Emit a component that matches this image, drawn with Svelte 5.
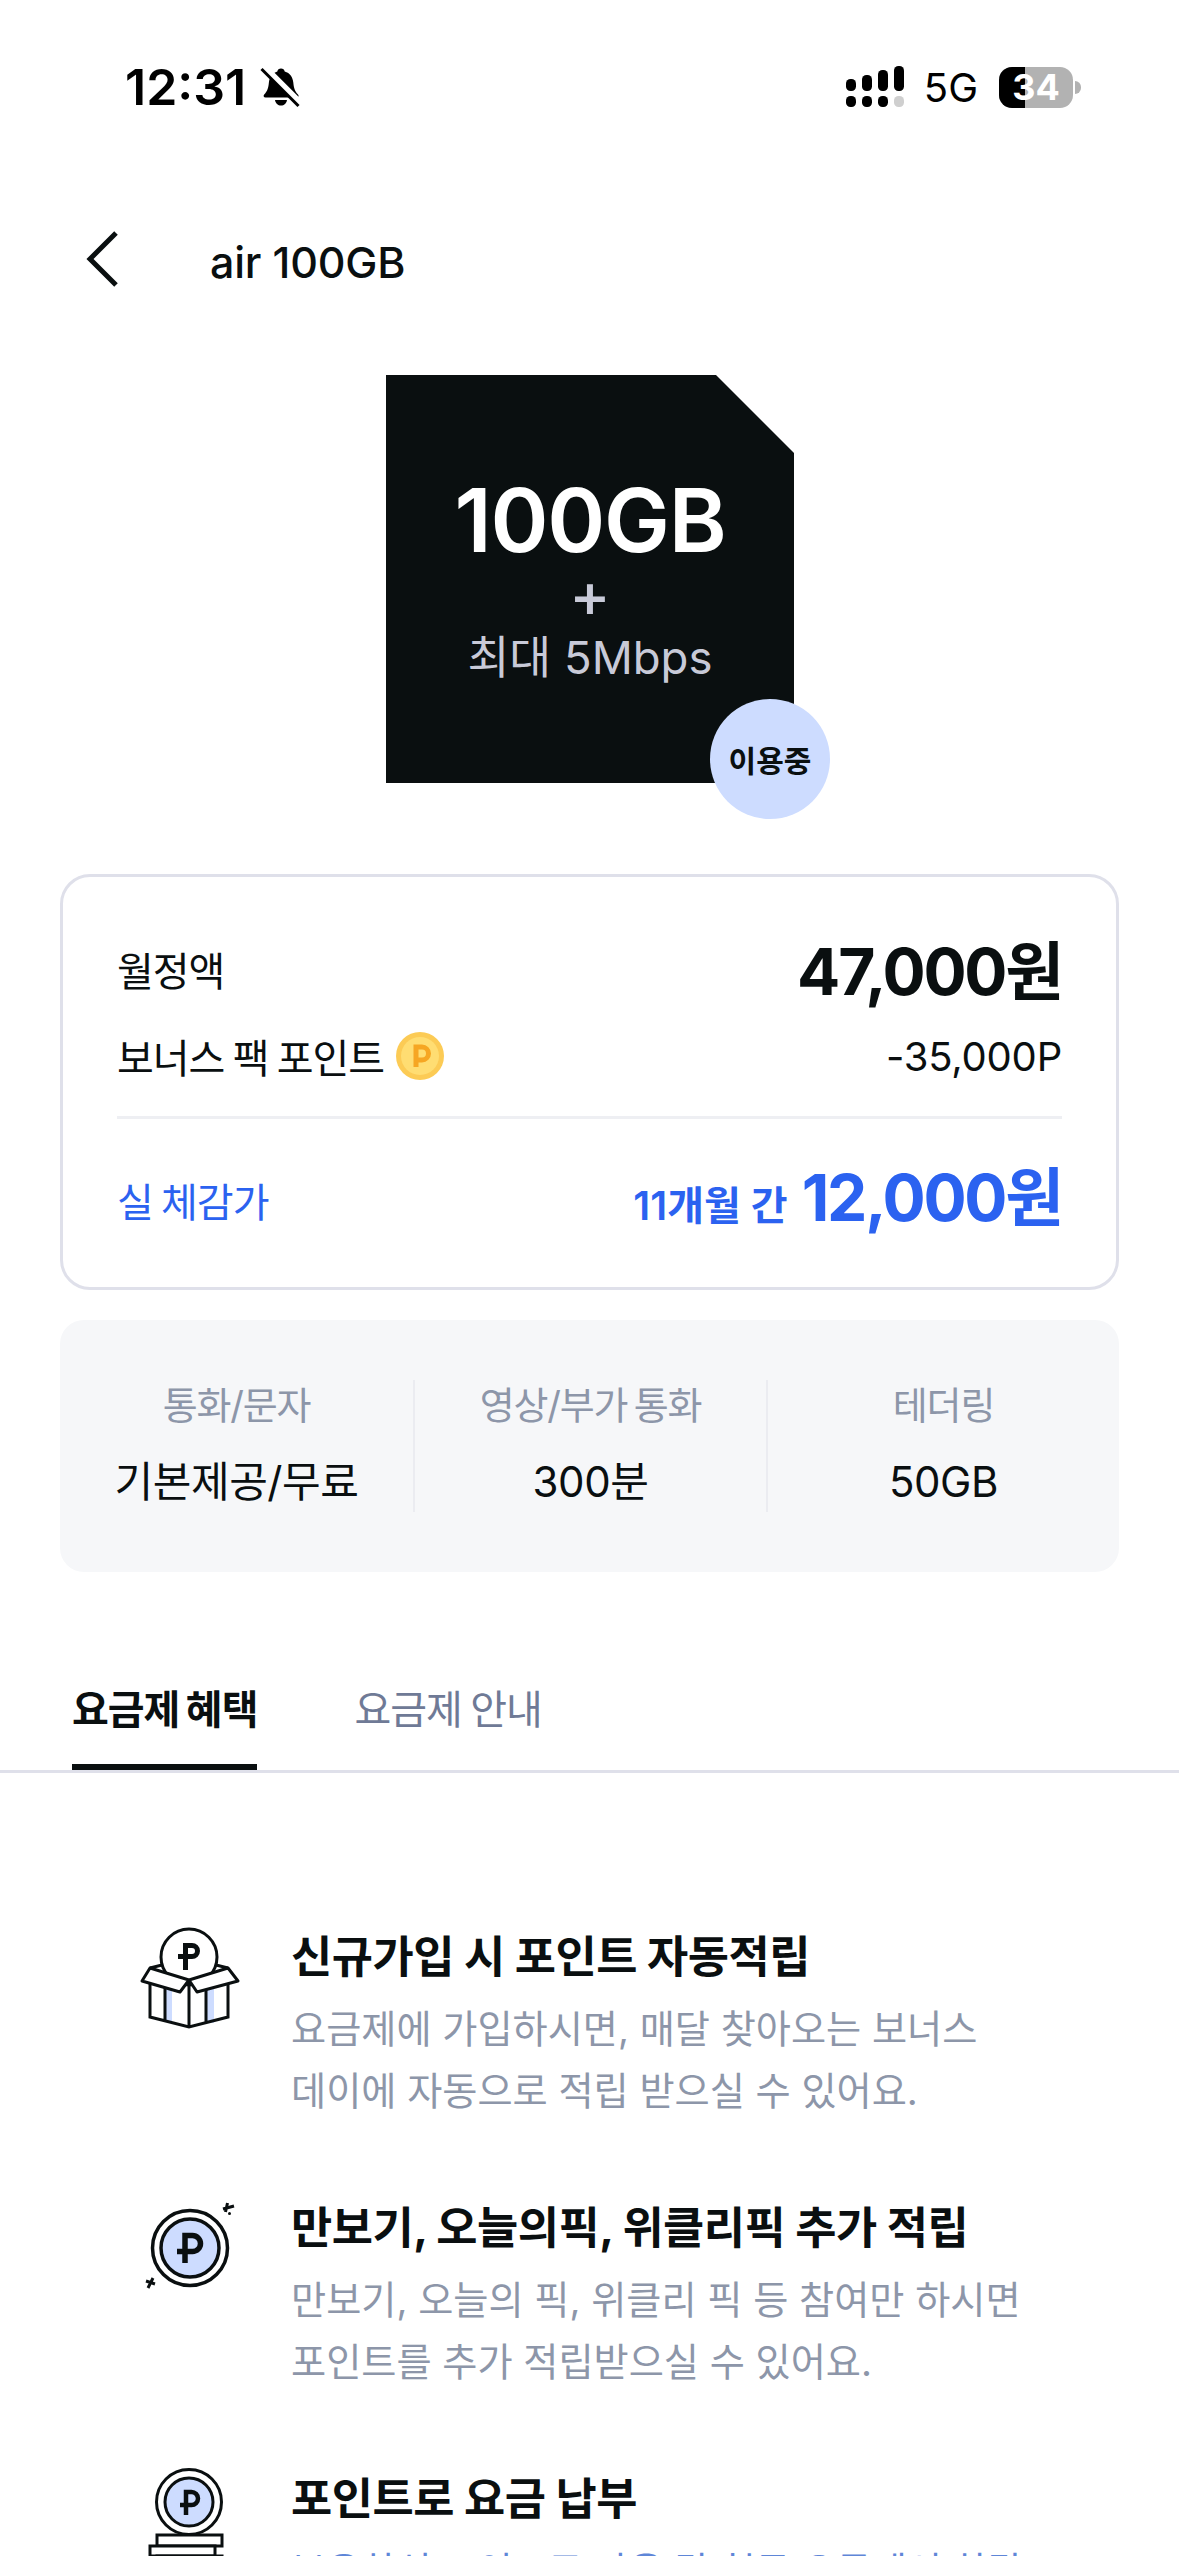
<script>
  const stats = [
    { label: "통화/문자", value: "기본제공/무료" },
    { label: "영상/부가 통화", value: "300분" },
    { label: "테더링", value: "50GB" }
  ];

  const benefits = [
    {
      icon: "box",
      title: "신규가입 시 포인트 자동적립",
      lines: ["요금제에 가입하시면, 매달 찾아오는 보너스", "데이에 자동으로 적립 받으실 수 있어요."]
    },
    {
      icon: "coin",
      title: "만보기, 오늘의픽, 위클리픽 추가 적립",
      lines: ["만보기, 오늘의 픽, 위클리 픽 등 참여만 하시면", "포인트를 추가 적립받으실 수 있어요."]
    },
    {
      icon: "stack",
      title: "포인트로 요금 납부",
      lines: ["보유하신 포인트로 다음 달 청구 요금에서 차감"],
      accent: true
    }
  ];
</script>

<div class="page">
  <header class="status">
    <div class="status-left">
      <span class="time">12:31</span>
      <svg class="bell" width="42" height="43" viewBox="0 0 42 42">
        <path d="M21 2c2 0 3.400 1.300 3.700 3 5.300 1.400 8 5.700 8.600 11 .5 5 1.200 8.500 4.700 12 1.200 1.300.5 3-1.300 3H5.500c-1.800 0-2.500-1.700-1.300-3 3.500-3.500 4.200-7 4.700-12 .6-5.300 3.800-9.600 8.400-11 .3-1.700 1.700-3 3.700-3z" fill="#000"/>
        <path d="M15 33.500h12c-.5 3.500-3 5.500-6 5.500s-5.500-2-6-5.500z" fill="#000"/>
        <path d="M4 0l37 37" stroke="#fff" stroke-width="6"/>
        <path d="M1.500 2.500l37 37" stroke="#000" stroke-width="3"/>
      </svg>
    </div>
    <div class="status-right">
      <svg width="58" height="42" viewBox="0 0 58 42">
        <rect x="0" y="13" width="10" height="12" rx="4.500"/>
        <rect x="16" y="9" width="10" height="16" rx="4.500"/>
        <rect x="32" y="4" width="10" height="21" rx="4.500"/>
        <rect x="48" y="0" width="10" height="25" rx="4.500"/>
        <rect x="0" y="30" width="10" height="11" rx="4.500"/>
        <rect x="16" y="30" width="10" height="11" rx="4.500"/>
        <rect x="32" y="30" width="10" height="11" rx="4.500"/>
        <rect x="48" y="30" width="10" height="11" rx="4.500" fill="#cfcfcf"/>
      </svg>
      <span class="net">5G</span>
      <div class="battery">
        <div class="battery-fill"></div>
        <span class="battery-num">34</span>
      </div>
      <span class="battery-cap"></span>
    </div>
  </header>

  <nav class="topbar">
    <svg class="back" width="34" height="58" viewBox="0 0 34 58">
      <path d="M31 3L5 29l26 26" fill="none" stroke="#0a0f10" stroke-width="5"/>
    </svg>
    <h1>air 100GB</h1>
  </nav>

  <section class="hero">
    <div class="sim">
      <div class="sim-main">100GB</div>
      <div class="sim-plus">+</div>
      <div class="sim-sub">최대 5Mbps</div>
    </div>
    <div class="badge">이용중</div>
  </section>

  <section class="price-card">
    <div class="row row-month">
      <span class="label">월정액</span>
      <strong class="amount">47,000원</strong>
    </div>
    <div class="row row-bonus">
      <span class="label bonus">
        보너스 팩 포인트
        <svg width="48" height="48" viewBox="0 0 48 48">
          <circle cx="24" cy="24" r="24" fill="#fccb55"/>
          <circle cx="24" cy="24" r="19" fill="#ffdd72"/>
          <path d="M20 35V15h6a6 6 0 0 1 0 13h-6" fill="none" stroke="#f6a623" stroke-width="5"/>
        </svg>
      </span>
      <span class="points">-35,000P</span>
    </div>
    <div class="rule"></div>
    <div class="row row-real">
      <span class="label blue">실 체감가</span>
      <span class="real">
        <span class="period">11개월 간</span>
        <strong class="amount blue">12,000원</strong>
      </span>
    </div>
  </section>

  <section class="stats">
    {#each stats as s}
      <div class="stat">
        <span class="stat-label">{s.label}</span>
        <span class="stat-value">{s.value}</span>
      </div>
    {/each}
  </section>

  <div class="tabs">
    <span class="tab active">요금제 혜택</span>
    <span class="tab">요금제 안내</span>
  </div>

  <section class="benefits">
    {#each benefits as b}
      <article class="benefit">
        <div class="icon">
          {#if b.icon === "box"}
            <svg width="102" height="110" viewBox="0 0 102 110" fill="none" stroke="#0a0f10" stroke-width="3">
              <circle cx="50" cy="37" r="28" fill="#fff"/>
              <path d="M46.500 50V25.500h6.500a5.500 5.500 0 0 1 0 11H39" stroke-width="5"/>
              <path d="M11 48l12-3M89 48l-12-3"/>
              <rect x="26" y="68" width="7" height="33" fill="#cddcff" stroke="none"/>
              <rect x="67" y="68" width="8" height="35" fill="#cddcff" stroke="none"/>
              <path d="M11 63v34l39 10 39-10V63M50 60v47M26 68v33M67 70v33"/>
              <path d="M11 48l39 12-9 12-38-11zM89 48l-39 12 8 12 41-11z" fill="#fff" stroke-linejoin="round"/>
            </svg>
          {:else if b.icon === "coin"}
            <svg width="102" height="110" viewBox="0 0 102 110" fill="none" stroke="#0a0f10" stroke-width="3.500">
              <circle cx="51" cy="57" r="37.500"/>
              <circle cx="51" cy="57" r="29" fill="#cddcff"/>
              <path d="M46 72V44.500h7.500a8 8 0 0 1 0 16H38" stroke-width="5.500"/>
              <path d="M84 18l11-3M88.500 12l-2 9M7 90l9 3M14 87l-5 10" stroke-width="3"/>
              <circle cx="90.500" cy="22.500" r="1.500" fill="#0a0f10" stroke="none"/>
            </svg>
          {:else}
            <svg width="102" height="110" viewBox="0 0 102 110" fill="none" stroke="#0a0f10" stroke-width="3">
              <circle cx="50" cy="40" r="32.500"/>
              <circle cx="50" cy="40" r="24" fill="#cddcff"/>
              <path d="M47 53V30h5.500a6.500 6.500 0 0 1 0 13H41" stroke-width="4.500"/>
              <rect x="18" y="73" width="65" height="11" fill="#fff"/>
              <rect x="11" y="84" width="65" height="10" fill="#fff"/>
              <rect x="18" y="94" width="65" height="10" fill="#fff"/>
            </svg>
          {/if}
        </div>
        <div class="copy">
          <h3>{b.title}</h3>
          {#each b.lines as line}
            <p class:accent={b.accent}>{line}</p>
          {/each}
        </div>
      </article>
    {/each}
  </section>
</div>

<style>
  :global(body) {
    margin: 0;
    background: #fff;
  }

  .page {
    width: 1179px;
    height: 2556px;
    overflow: hidden;
    background: #fff;
    color: #0a0f10;
    font-family: Inter, "Noto Sans CJK KR", sans-serif;
  }

  .status {
    height: 220px;
    box-sizing: border-box;
    padding: 64px 98px 0 125px;
    display: flex;
    justify-content: space-between;
    align-items: flex-start;
  }

  .status-left {
    display: flex;
    align-items: center;
    gap: 14px;
  }

  .time {
    font-size: 50px;
    line-height: 46px;
    font-weight: 600;
    color: #000;
  }

  .status-right {
    display: flex;
    align-items: center;
    height: 46px;
  }

  .net {
    font-size: 40px;
    font-weight: 400;
    margin: 0 21px 0 20px;
    color: #000;
  }

  .battery {
    position: relative;
    width: 74px;
    height: 41px;
    border-radius: 13px;
    background: #b2b2b2;
    overflow: hidden;
    display: flex;
    align-items: center;
    justify-content: center;
  }

  .battery-fill {
    position: absolute;
    left: 0;
    top: 0;
    bottom: 0;
    width: 26px;
    background: #000;
  }

  .battery-num {
    position: relative;
    font-size: 36px;
    font-weight: 700;
    color: #fff;
  }

  .battery-cap {
    width: 6px;
    height: 13px;
    margin-left: 2px;
    background: #b2b2b2;
    border-radius: 0 6px 6px 0;
  }

  .topbar {
    height: 78px;
    display: flex;
    align-items: center;
    padding-left: 85px;
    gap: 91px;
  }

  .back {
    flex: none;
  }

  h1 {
    margin: 0;
    font-size: 43px;
    font-weight: 500;
    letter-spacing: -0.2px;
    padding-top: 5px;
  }

  .hero {
    position: relative;
    width: 408px;
    height: 408px;
    margin: 77px 0 0 386px;
  }

  .sim {
    width: 408px;
    height: 408px;
    background: #0a0f10;
    clip-path: polygon(0 0, 330px 0, 100% 78px, 100% 100%, 0 100%);
    display: flex;
    flex-direction: column;
    align-items: center;
    color: #fff;
    padding-top: 95px;
    box-sizing: border-box;
  }

  .sim-main {
    font-size: 88px;
    line-height: 100px;
    font-weight: 600;
    letter-spacing: -1.2px;
  }

  .sim-plus,
  .sim-sub {
    color: #c8cad8;
  }

  .sim-plus {
    font-size: 62px;
    line-height: 60px;
    font-weight: 500;
    margin-top: -5px;
  }

  .sim-sub {
    font-size: 45.500px;
    line-height: 60px;
    font-weight: 400;
    margin-top: 3px;
  }

  .badge {
    position: absolute;
    left: 324px;
    top: 324px;
    width: 120px;
    height: 120px;
    border-radius: 50%;
    background: #cddcff;
    display: flex;
    align-items: center;
    justify-content: center;
    font-size: 30px;
    font-weight: 600;
  }

  .price-card {
    margin: 91px 60px 0;
    height: 416px;
    box-sizing: border-box;
    border: 3px solid #dfe0ea;
    border-radius: 30px;
    padding: 0 54px;
  }

  .row {
    display: flex;
    justify-content: space-between;
    align-items: center;
  }

  .row-month {
    height: 80px;
    margin-top: 50px;
  }

  .row-month .label {
    margin-top: 3px;
  }

  .row-bonus {
    height: 60px;
    margin-top: 19px;
  }

  .label {
    font-size: 40px;
    font-weight: 400;
    letter-spacing: -1px;
    word-spacing: -2px;
  }

  .bonus {
    display: flex;
    align-items: center;
    gap: 12px;
  }

  .amount {
    font-size: 64px;
    font-weight: 700;
    letter-spacing: -2.200px;
  }

  .points {
    font-size: 40px;
    font-weight: 400;
    letter-spacing: -0.2px;
  }

  .rule {
    height: 3px;
    margin-top: 30px;
    background: #eeeff3;
  }

  .row-real {
    height: 80px;
    margin-top: 34px;
  }

  .row-real .label {
    margin-top: 14px;
  }

  .blue {
    color: #2b62f0;
  }

  .real {
    display: flex;
    align-items: center;
    gap: 14px;
    color: #2b62f0;
  }

  .period {
    font-size: 40px;
    font-weight: 600;
    margin-top: 20px;
  }

  .stats {
    margin: 30px 60px 0;
    height: 252px;
    border-radius: 24px;
    background: #f6f7f9;
    display: grid;
    grid-template-columns: repeat(3, 1fr);
    align-items: center;
  }

  .stat {
    height: 132px;
    box-sizing: border-box;
    padding-bottom: 4px;
    display: flex;
    flex-direction: column;
    align-items: center;
    justify-content: space-between;
    border-left: 2px solid #ebecf1;
  }

  .stat:first-child {
    border-left: none;
  }

  .stat-label {
    font-size: 38px;
    line-height: 46px;
    letter-spacing: -1.200px;
    word-spacing: -3px;
    color: #8d96a9;
    padding-top: 2px;
  }

  .stat-value {
    font-size: 42px;
    line-height: 52px;
    letter-spacing: -0.4px;
  }

  .tabs {
    margin-top: 108px;
    height: 90px;
    padding-left: 72px;
    display: flex;
    gap: 97px;
    border-bottom: 3px solid #dfe0ea;
  }

  .tab {
    font-size: 40px;
    line-height: 60px;
    letter-spacing: -1px;
    word-spacing: -2px;
    color: #6f7a96;
  }

  .tab.active {
    box-sizing: border-box;
    height: 90px;
    color: #0a0f10;
    font-weight: 700;
    border-bottom: 6px solid #0a0f10;
  }

  .benefits {
    padding: 158px 0 0 139px;
    display: flex;
    flex-direction: column;
    gap: 80px;
  }

  .benefit {
    display: flex;
    gap: 50px;
  }

  .icon {
    width: 102px;
    flex: none;
    margin-top: -11px;
  }

  h3 {
    margin: 0 0 15px;
    font-size: 44.800px;
    line-height: 52px;
    font-weight: 700;
    letter-spacing: -0.5px;
  }

  p {
    margin: 0;
    font-size: 38.200px;
    line-height: 62px;
    color: #8d96a9;
  }

  p.accent {
    color: #5f86d8;
  }
</style>
